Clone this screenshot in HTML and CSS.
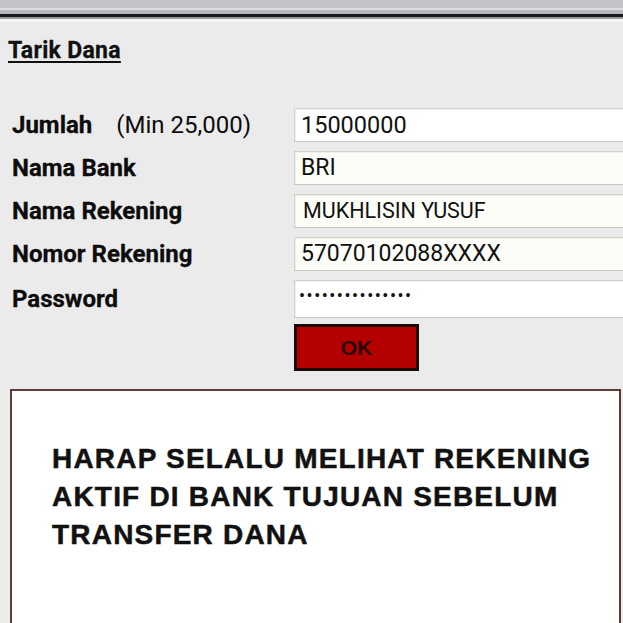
FILE: index.html
```html
<!DOCTYPE html>
<html lang="id">
<head>
    <meta charset="UTF-8">
    <meta name="viewport" content="width=device-width, initial-scale=1.0">
    <title>Tarik Dana</title>
    <link rel="stylesheet" href="styles.css">
</head>
<body>
    <!-- Garis atas jendela -->
    <div class="topbar"></div>

    <div class="page">
        <h1 class="title">Tarik Dana</h1>

        <form class="form" onsubmit="return false">
            <label class="label">Jumlah <span class="hint">(Min 25,000)</span></label>
            <div class="field">15000000</div>

            <label class="label">Nama Bank</label>
            <div class="field tint">BRI</div>

            <label class="label">Nama Rekening</label>
            <div class="field tint small">MUKHLISIN YUSUF</div>

            <label class="label">Nomor Rekening</label>
            <div class="field tint">57070102088XXXX</div>

            <label class="label">Password</label>
            <div class="field pass">•••••••••••••••</div>

            <div></div>
            <div class="actions">
                <button class="ok-btn" type="submit">OK</button>
            </div>
        </form>

        <!-- Kotak pesan -->
        <div class="notice">
            <p>HARAP SELALU MELIHAT REKENING<br>AKTIF DI BANK TUJUAN SEBELUM<br>TRANSFER DANA</p>
        </div>
    </div>
</body>
</html>
```

FILE: styles.css
```css
html, body {
    margin: 0;
    height: 100%;
    overflow: hidden;
}

body {
    background-color: #ebebeb;
    font-family: Roboto, "Liberation Sans", Arial, sans-serif;
    color: #111;
}

/* barra superior */
.topbar {
    height: 24px;
    background: linear-gradient(to bottom,
        #c3c3c8 0, #c3c3c8 8px,
        #dcdcdf 8px, #dcdcdf 10px,
        #b8b8bc 10px, #b8b8bc 14px,
        #1a1a1a 14px, #1a1a1a 17px,
        #9a9a9e 17px, #9a9a9e 19px,
        #f4f4f4 19px, #f4f4f4 22px,
        #ebebeb 22px);
}

.title {
    margin: 14px 0 0 8px;
    font-size: 23px;
    font-weight: bold;
    letter-spacing: 0.3px;
    text-decoration: underline;
    text-underline-offset: 3px;
    text-decoration-thickness: 2px;
    line-height: 26px;
    -webkit-text-stroke: 0.3px #111;
}

.form {
    display: grid;
    grid-template-columns: 282px 340px;
    row-gap: 9px;
    margin-top: 44px;
    padding-left: 12px;
    align-items: center;
}

.label {
    font-size: 24px;
    font-weight: bold;
    color: #0c0c0c;
    -webkit-text-stroke: 0.3px #0c0c0c;
}

.label .hint {
    font-weight: normal;
    margin-left: 18px;
    -webkit-text-stroke: 0;
}

.field {
    box-sizing: border-box;
    height: 34px;
    background: #fff;
    border: 1px solid #d2d2cc;
    border-bottom-color: #c4c8bc;
    box-shadow: inset 1px 1px 0 #f0f0ea;
    font-size: 23.5px;
    line-height: 32px;
    padding-left: 6px;
    color: #111;
}

.field.tint {
    background: #fcfdf6;
    font-size: 23px;
}

.field.small {
    font-size: 21.5px;
    padding-left: 8px;
}

.field.pass {
    height: 38px;
    font-size: 18px;
    line-height: 30px;
    letter-spacing: 1.5px;
    padding-left: 4px;
}

.actions {
    margin-top: -3px;
}

.ok-btn {
    width: 125px;
    height: 47px;
    background: #b30000;
    border: 3px solid #1c0a0a;
    font-family: "Liberation Sans", Arial, sans-serif;
    font-size: 21px;
    font-weight: bold;
    color: #2a0505;
    padding: 0;
    cursor: pointer;
}

.notice {
    box-sizing: border-box;
    margin: 18px 0 0 10px;
    width: 611px;
    height: 300px;
    background: #fff;
    border: 2px solid #5e3b34;
    padding: 49px 0 0 40px;
}

.notice p {
    margin: 0;
    font-family: "Liberation Sans", Arial, sans-serif;
    font-size: 28px;
    font-weight: bold;
    line-height: 38px;
    letter-spacing: 1.2px;
    color: #111;
    -webkit-text-stroke: 0.5px #111;
}
```
